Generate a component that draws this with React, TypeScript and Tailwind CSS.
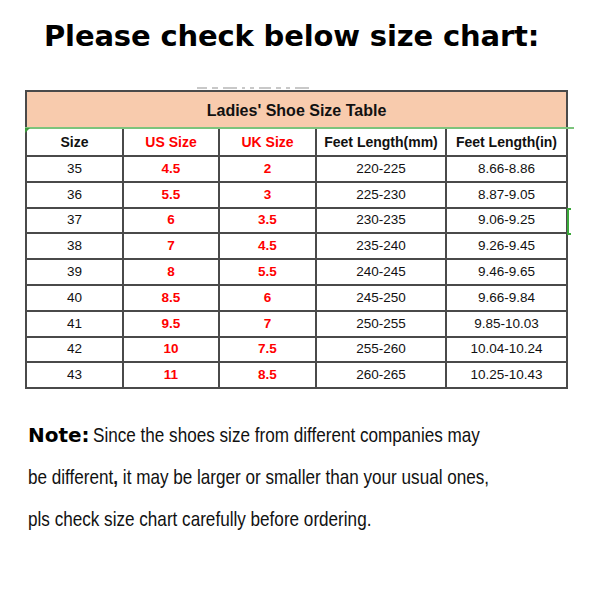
import React from "react";

const rows: string[][] = [
  ["35", "4.5", "2", "220-225", "8.66-8.86"],
  ["36", "5.5", "3", "225-230", "8.87-9.05"],
  ["37", "6", "3.5", "230-235", "9.06-9.25"],
  ["38", "7", "4.5", "235-240", "9.26-9.45"],
  ["39", "8", "5.5", "240-245", "9.46-9.65"],
  ["40", "8.5", "6", "245-250", "9.66-9.84"],
  ["41", "9.5", "7", "250-255", "9.85-10.03"],
  ["42", "10", "7.5", "255-260", "10.04-10.24"],
  ["43", "11", "8.5", "260-265", "10.25-10.43"],
];

const rowHeights = ["h-[26px]", "h-[26px]", "h-[25px]", "h-[26px]", "h-[26px]", "h-[26px]", "h-[26px]", "h-[25px]", "h-[26px]"];

const cell = "flex items-center justify-center border-r-2 border-b-2 border-[#4a4a4a]";

export default function App() {
  return (
    <div
      className="w-[600px] h-[600px] bg-white overflow-hidden flex flex-col"
      style={{ fontFamily: '"Liberation Sans", Arial, sans-serif' }}
    >
      <div
        className="mt-[18px] h-[36px] pl-[44px] text-[29px] leading-[36px] font-bold text-black whitespace-nowrap tracking-[-0.15px]"
        style={{ fontFamily: '"DejaVu Sans", sans-serif' }}
      >
        Please check below size chart:
      </div>

      <div className="h-[36px] flex flex-col justify-end">
        <div className="ml-[197px] mb-[1px] flex gap-[5px] items-end h-[3px]">
          <div className="w-[10px] h-[2px] bg-[#c8c8c8]" />
          <div className="w-[6px] h-[2px] bg-[#c8c8c8]" />
          <div className="w-[14px] h-[2px] bg-[#c8c8c8]" />
          <div className="w-[3px] h-[2px] bg-[#c8c8c8]" />
          <div className="w-[4px] h-[2px] bg-[#c8c8c8]" />
          <div className="w-[12px] h-[2px] bg-[#c8c8c8]" />
          <div className="w-[5px] h-[2px] bg-[#c8c8c8]" />
          <div className="w-[4px] h-[2px] bg-[#c8c8c8]" />
          <div className="w-[14px] h-[2px] bg-[#c8c8c8]" />
        </div>
      </div>

      <div className="relative ml-[25px] w-[543px] border-l-2 border-t-2 border-[#4a4a4a]">
        <div className="h-[37px] bg-[#f8cbad] border-r-2 border-b-2 border-r-[#4a4a4a] border-b-[#7cc47c] flex items-center justify-center pt-[2px] text-[16px] font-bold text-[#111]">
          Ladies' Shoe Size Table
        </div>
        <div className="grid grid-cols-[97px_96px_97px_130px_121px]">
          <div className={`${cell} h-[28px] text-[14px] font-bold text-[#111]`}>Size</div>
          <div className={`${cell} h-[28px] text-[14px] font-bold text-[#ff0000]`}>US Size</div>
          <div className={`${cell} h-[28px] text-[14px] font-bold text-[#ff0000]`}>UK Size</div>
          <div className={`${cell} h-[28px] text-[14px] font-bold text-[#111]`}>Feet Length(mm)</div>
          <div className={`${cell} h-[28px] text-[14px] font-bold text-[#111]`}>Feet Length(in)</div>
          {rows.map((r, i) => (
            <React.Fragment key={r[0]}>
              <div className={`${cell} ${rowHeights[i]} text-[13.5px] text-[#111]`}>{r[0]}</div>
              <div className={`${cell} ${rowHeights[i]} text-[13.5px] font-bold text-[#ff0000]`}>{r[1]}</div>
              <div className={`${cell} ${rowHeights[i]} text-[13.5px] font-bold text-[#ff0000]`}>{r[2]}</div>
              <div className={`${cell} ${rowHeights[i]} text-[13.5px] text-[#111]`}>{r[3]}</div>
              <div className={`${cell} ${rowHeights[i]} text-[13.5px] text-[#111]`}>{r[4]}</div>
            </React.Fragment>
          ))}
        </div>
        <div className="absolute left-[-2px] top-[35px] w-[549px] h-[2px] bg-[#7cc47c]" />
        <div className="absolute left-[-2px] top-[36px] w-0 h-0 border-t-[5px] border-r-[5px] border-t-[#3c9a3c] border-r-transparent" />
        <div className="absolute left-[540px] top-[116px] w-[4px] h-[27px] border-2 border-l-2 border-r-0 border-[#3aa83a]" />
      </div>

      <div className="mt-[25px] pl-[28px] text-[21px] leading-[42px] text-[#111] whitespace-nowrap">
        <div className="flex items-baseline">
          <span
            className="inline-block w-[65px] font-bold text-[20px] text-black"
            style={{ fontFamily: '"DejaVu Sans", sans-serif' }}
          >
            Note:
          </span>
          <span className="inline-block origin-left scale-x-[0.815]">
            Since the shoes size from different companies may
          </span>
        </div>
        <div>
          <span className="inline-block origin-left scale-x-[0.815]">
            be different<span className="font-bold">,</span> it may be larger or smaller than your usual ones,
          </span>
        </div>
        <div>
          <span className="inline-block origin-left scale-x-[0.815]">
            pls check size chart carefully before ordering.
          </span>
        </div>
      </div>
    </div>
  );
}
